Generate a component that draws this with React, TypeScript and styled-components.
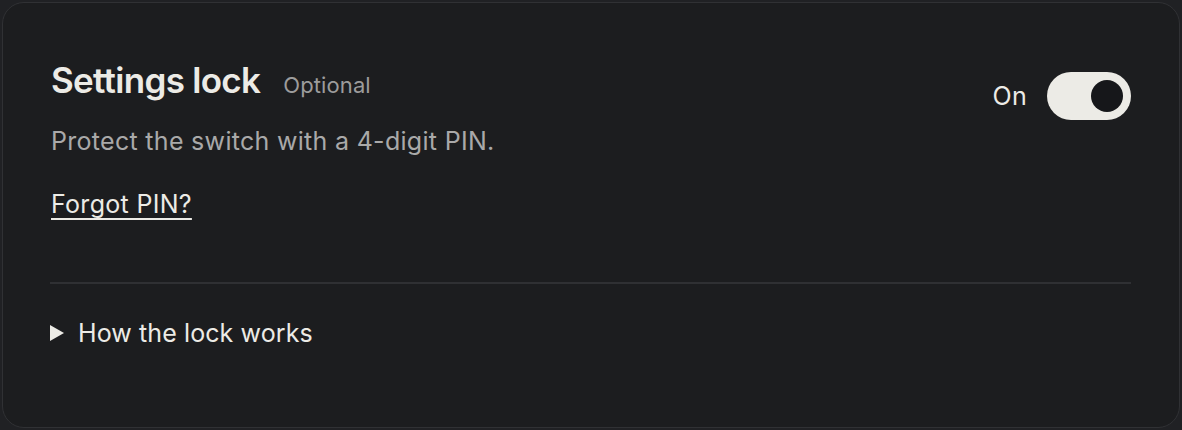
import React, { useState } from 'react'
import styled, { createGlobalStyle } from 'styled-components'

const GlobalStyle = createGlobalStyle`
    html, body {
        margin: 0;
        padding: 0;
        background: #202124;
    }
    body {
        padding: 2px;
        font-family: Inter, "Noto Sans", "Liberation Sans", sans-serif;
        -webkit-font-smoothing: antialiased;
    }
    * {
        box-sizing: border-box;
    }
`

const Card = styled.section`
    width: 1178px;
    height: 426px;
    background: #1c1d1f;
    border: 1px solid #303134;
    border-radius: 22px;
    padding: 56px 48px 0 47px;
    display: flex;
    flex-direction: column;
`

const Header = styled.div`
    display: flex;
    justify-content: space-between;
    align-items: flex-start;
`

const Info = styled.div`
    display: flex;
    flex-direction: column;
    padding-left: 1px;
`

const TitleRow = styled.div`
    display: flex;
    align-items: baseline;
    gap: 23px;
`

const Title = styled.h2`
    margin: 0;
    font-size: 35px;
    font-weight: 600;
    line-height: 42px;
    letter-spacing: -0.7px;
    color: #ecebe6;
`

const Tag = styled.span`
    font-size: 22px;
    letter-spacing: 0.1px;
    color: #9c9c9c;
`

const Description = styled.p`
    margin: 24px 0 0 0;
    font-size: 25px;
    line-height: 32px;
    letter-spacing: 0.3px;
    color: #a9a9a9;
`

const TextLink = styled.a`
    margin-top: 31px;
    align-self: flex-start;
    font-size: 25px;
    line-height: 32px;
    letter-spacing: 0.3px;
    color: #ecebe6;
    text-decoration: underline;
    text-underline-offset: 5px;
    text-decoration-thickness: 2px;
    cursor: pointer;
`

const SwitchGroup = styled.label`
    display: flex;
    align-items: center;
    gap: 20px;
    margin-top: 13px;
    cursor: pointer;
`

const SwitchLabel = styled.span`
    font-size: 25px;
    letter-spacing: 0.3px;
    color: #ecebe6;
`

const Track = styled.button<{ $on: boolean }>`
    width: 84px;
    height: 48px;
    border-radius: 24px;
    border: none;
    background: ${p => (p.$on ? '#ecebe6' : '#3a3b3e')};
    display: flex;
    align-items: center;
    justify-content: ${p => (p.$on ? 'flex-end' : 'flex-start')};
    padding: 0 8px;
    cursor: pointer;
`

const Knob = styled.span<{ $on: boolean }>`
    width: 32px;
    height: 32px;
    border-radius: 50%;
    background: ${p => (p.$on ? '#16171a' : '#ecebe6')};
`

const Divider = styled.hr`
    margin: 62px 0 0 0;
    border: none;
    height: 2px;
    background: #2f3033;
`

const Details = styled.details`
    margin-top: 33px;
`

const Summary = styled.summary`
    list-style: none;
    display: flex;
    align-items: center;
    gap: 14px;
    font-size: 25px;
    line-height: 32px;
    letter-spacing: 0.1px;
    color: #ecebe6;
    cursor: pointer;

    &::-webkit-details-marker {
        display: none;
    }
`

const Caret = styled.svg<{ $open: boolean }>`
    width: 14px;
    height: 16px;
    flex: none;
    transform: rotate(${p => (p.$open ? 90 : 0)}deg);
`

const Body = styled.p`
    margin: 12px 0 0 28px;
    font-size: 20px;
    color: #a9a9a9;
`

export default function App() {
    const [on, setOn] = useState(true)
    const [open, setOpen] = useState(false)

    return (
        <>
            <GlobalStyle />
            <Card>
                <Header>
                    <Info>
                        <TitleRow>
                            <Title>Settings lock</Title>
                            <Tag>Optional</Tag>
                        </TitleRow>
                        <Description>Protect the switch with a 4-digit PIN.</Description>
                        <TextLink>Forgot PIN?</TextLink>
                    </Info>
                    <SwitchGroup>
                        <SwitchLabel>{on ? 'On' : 'Off'}</SwitchLabel>
                        <Track
                            $on={on}
                            role="switch"
                            aria-checked={on}
                            onClick={() => setOn(!on)}
                        >
                            <Knob $on={on} />
                        </Track>
                    </SwitchGroup>
                </Header>
                <Divider />
                <Details open={open} onToggle={e => setOpen((e.target as HTMLDetailsElement).open)}>
                    <Summary>
                        <Caret $open={open} viewBox="0 0 14 16">
                            <path d="M0 0 L14 8 L0 16 Z" fill="#ecebe6" />
                        </Caret>
                        How the lock works
                    </Summary>
                    <Body>Once a PIN is set, changing this switch asks for it first.</Body>
                </Details>
            </Card>
        </>
    )
}
